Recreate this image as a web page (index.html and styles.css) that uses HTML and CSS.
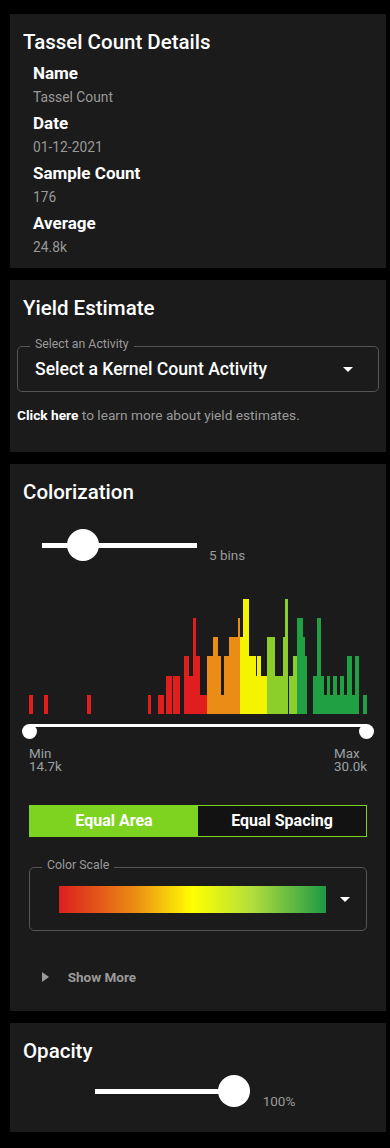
FILE: index.html
```html
<!DOCTYPE html>
<html lang="en">
<head>
  <meta charset="UTF-8">
  <meta name="viewport" content="width=device-width, initial-scale=1.0">
  <title>Tassel Count Details</title>
  <link rel="stylesheet" href="styles.css">
</head>
<body>
  <main class="panel">
    <!-- Activity details -->
    <section class="card">
      <h2 class="card-title">Tassel Count Details</h2>
      <dl class="fields">
        <dt>Name</dt>
        <dd>Tassel Count</dd>
        <dt>Date</dt>
        <dd>01-12-2021</dd>
        <dt>Sample Count</dt>
        <dd>176</dd>
        <dt>Average</dt>
        <dd>24.8k</dd>
      </dl>
    </section>

    <!-- Yield estimate -->
    <section class="card card-yield">
      <h2 class="card-title">Yield Estimate</h2>
      <fieldset class="outlined select-field">
        <legend>Select an Activity</legend>
        <div class="select-inner">
          <span class="select-value">Select a Kernel Count Activity</span>
          <svg class="caret" width="10" height="5" viewBox="0 0 10 5"><path d="M0 0h10L5 5z"/></svg>
        </div>
      </fieldset>
      <p class="hint"><strong>Click here</strong> to learn more about yield estimates.</p>
    </section>

    <!-- Colorization -->
    <section class="card card-color">
      <h2 class="card-title">Colorization</h2>

      <div class="slider-row bins">
        <div class="slider">
          <div class="slider-track"></div>
          <div class="slider-thumb" style="left: calc(26.5% - 16px)"></div>
        </div>
        <span class="slider-value">5 bins</span>
      </div>

      <svg class="histogram" width="338" height="116" viewBox="29 0 338 116" shape-rendering="crispEdges">
        <g class="red">
          <rect x="29.3" y="96.8" width="3.7" height="19.2"/>
          <rect x="44.3" y="96.8" width="4" height="19.2"/>
          <rect x="86.7" y="96.8" width="4" height="19.2"/>
          <rect x="147.5" y="96.8" width="3.8" height="19.2"/>
          <rect x="157.5" y="96.8" width="6" height="19.2"/>
          <rect x="165.5" y="77.6" width="6.2" height="38.4"/>
          <rect x="173.3" y="77.6" width="6.7" height="38.4"/>
          <rect x="184.3" y="58.4" width="4.3" height="57.6"/>
          <rect x="188.6" y="77.6" width="4" height="38.4"/>
          <rect x="192.6" y="20" width="3.7" height="96"/>
          <rect x="196.3" y="58.4" width="3.7" height="57.6"/>
          <rect x="200" y="96.8" width="7" height="19.2"/>
        </g>
        <g class="orange">
          <rect x="207" y="58.4" width="6" height="57.6"/>
          <rect x="213" y="39.2" width="4.7" height="76.8"/>
          <rect x="217.7" y="58.4" width="3.6" height="57.6"/>
          <rect x="221.3" y="96.8" width="3" height="19.2"/>
          <rect x="224.3" y="58.4" width="4.3" height="57.6"/>
          <rect x="228.6" y="39.2" width="9.4" height="76.8"/>
          <rect x="238" y="20" width="2.3" height="96"/>
        </g>
        <g class="yellow">
          <rect x="240.3" y="39.2" width="2.3" height="76.8"/>
          <rect x="242.6" y="0.8" width="6" height="115.2"/>
          <rect x="248.6" y="58.4" width="7.4" height="57.6"/>
          <rect x="256" y="77.6" width="1" height="38.4"/>
          <rect x="257" y="58.4" width="4" height="57.6"/>
          <rect x="261" y="77.6" width="5.8" height="38.4"/>
        </g>
        <g class="lime">
          <rect x="266.8" y="39.2" width="8.5" height="76.8"/>
          <rect x="275.3" y="77.6" width="8" height="38.4"/>
          <rect x="283.3" y="39.2" width="2" height="76.8"/>
          <rect x="285.3" y="0.8" width="3" height="115.2"/>
          <rect x="289" y="77.6" width="3.7" height="38.4"/>
          <rect x="292.7" y="58.4" width="4.6" height="57.6"/>
        </g>
        <g class="green">
          <rect x="297.3" y="20" width="5.7" height="96"/>
          <rect x="303" y="39.2" width="2" height="76.8"/>
          <rect x="305" y="58.4" width="2" height="57.6"/>
          <rect x="313.3" y="77.6" width="3.5" height="38.4"/>
          <rect x="316.8" y="20" width="4.2" height="96"/>
          <rect x="321" y="77.6" width="2.6" height="38.4"/>
          <rect x="323.6" y="96.8" width="3.2" height="19.2"/>
          <rect x="326.8" y="77.6" width="3.5" height="38.4"/>
          <rect x="330.3" y="96.8" width="2.5" height="19.2"/>
          <rect x="332.8" y="77.6" width="4" height="38.4"/>
          <rect x="336.8" y="96.8" width="2.8" height="19.2"/>
          <rect x="339.6" y="77.6" width="4" height="38.4"/>
          <rect x="343.6" y="96.8" width="3.7" height="19.2"/>
          <rect x="347.3" y="58.4" width="4.7" height="57.6"/>
          <rect x="352" y="96.8" width="3.3" height="19.2"/>
          <rect x="355.3" y="58.4" width="4" height="57.6"/>
          <rect x="363.3" y="96.8" width="3.7" height="19.2"/>
        </g>
      </svg>

      <div class="range">
        <div class="range-track"></div>
        <span class="range-thumb range-min"></span>
        <span class="range-thumb range-max"></span>
      </div>
      <div class="limits">
        <div>Min<br>14.7k</div>
        <div>Max<br>30.0k</div>
      </div>

      <div class="toggle">
        <button class="toggle-btn active">Equal Area</button>
        <button class="toggle-btn">Equal Spacing</button>
      </div>

      <fieldset class="outlined scale-field">
        <legend>Color Scale</legend>
        <div class="scale-inner">
          <div class="scale-bar"></div>
          <svg class="caret" width="10" height="5" viewBox="0 0 10 5"><path d="M0 0h10L5 5z"/></svg>
        </div>
      </fieldset>

      <div class="show-more">
        <svg width="7" height="10" viewBox="0 0 7 10"><path d="M0 0l7 5-7 5z"/></svg>
        <span>Show More</span>
      </div>
    </section>

    <!-- Opacity -->
    <section class="card card-opacity">
      <h2 class="card-title">Opacity</h2>
      <div class="slider-row opacity">
        <div class="slider">
          <div class="slider-track"></div>
          <div class="slider-thumb" style="left: calc(100% - 15px)"></div>
        </div>
        <span class="slider-value">100%</span>
      </div>
    </section>
  </main>
</body>
</html>
```

FILE: styles.css
```css
body {
  margin: 0;
  background: #000;
  color: #fff;
  font-family: Roboto, "Noto Sans", Arial, sans-serif;
}

.panel {
  display: flex;
  flex-direction: column;
  gap: 12px;
  width: 376px;
  padding: 14px 0 17px 10px;
}

.card {
  background: #1b1b1b;
  padding: 16px 13px 0;
}

.card-title {
  margin: 0;
  font-size: 20.5px;
  font-weight: 500;
  line-height: 24px;
}

/* details list */
.fields {
  margin: 9px 0 0;
  padding: 0 0 12px 10px;
}

.fields dt {
  font-size: 17px;
  font-weight: 700;
  line-height: 20px;
}

.fields dd {
  margin: 5px 0 7px;
  font-size: 13.8px;
  line-height: 18px;
  color: #999;
}

.fields dd:last-child {
  margin-bottom: 0;
}

/* outlined fields */
.outlined {
  margin: 0;
  padding: 0;
  min-width: 0;
  border: 1px solid #555;
  border-radius: 5px;
}

.outlined legend {
  margin-left: 12px;
  padding: 0 5px 4px;
  font-size: 12.3px;
  line-height: 14px;
  color: #9a9a9a;
}

.caret {
  fill: #fff;
  flex-shrink: 0;
}

.card-yield {
  padding: 16px 7px 29px;
}

.card-yield .card-title {
  margin-left: 6px;
}

.select-field {
  margin-top: 17px;
}

.select-inner {
  display: flex;
  align-items: center;
  justify-content: space-between;
  padding: 3px 25px 11px 17px;
}

.select-value {
  font-size: 17.6px;
  font-weight: 500;
  line-height: 22px;
}

.hint {
  margin: 15px 0 0;
  font-size: 13.7px;
  line-height: 16px;
  color: #9a9a9a;
}

.hint strong {
  color: #fff;
}

/* sliders */
.slider-row {
  display: flex;
  align-items: flex-start;
}

.slider {
  position: relative;
  height: 32px;
}

.slider-track {
  height: 5px;
  margin-top: 13.5px;
  background: #fff;
}

.slider-thumb {
  position: absolute;
  top: 0;
  width: 32px;
  height: 32px;
  border-radius: 50%;
  background: #fff;
}

.slider-value {
  margin-top: 18px;
  font-size: 13.5px;
  line-height: 16px;
  color: #9a9a9a;
}

.bins {
  margin: 25px 0 0 18.7px;
}

.bins .slider {
  width: 155px;
}

.bins .slider-value {
  margin-left: 12.3px;
}

.card-color {
  padding-bottom: 25px;
}

/* histogram */
.histogram {
  display: block;
  margin: 35px 6px 0;
}

.histogram .red rect { fill: #e01e1e; }
.histogram .orange rect { fill: #ea8c16; }
.histogram .yellow rect { fill: #f4f400; }
.histogram .lime rect { fill: #8ccf2a; }
.histogram .green rect { fill: #20a043; }

.range {
  position: relative;
  height: 16px;
  margin: 9.5px 6px 0;
}

.range-track {
  height: 3px;
  margin-top: 6.5px;
  background: #fff;
}

.range-thumb {
  position: absolute;
  top: 0.5px;
  width: 15px;
  height: 15px;
  border-radius: 50%;
  background: #fff;
}

.range-min {
  left: -7px;
}

.range-max {
  right: -7px;
}

.limits {
  display: flex;
  justify-content: space-between;
  margin: 7px 6px 0;
  font-size: 13.4px;
  line-height: 13.5px;
  color: #9aa0a6;
}

/* toggle */
.toggle {
  display: flex;
  margin: 31px 6px 0;
  border: 1.5px solid #7ed321;
}

.toggle-btn {
  flex: 1;
  padding: 0;
  border: none;
  background: #121212;
  color: #fff;
  font-family: inherit;
  font-size: 16px;
  font-weight: 700;
  line-height: 30px;
}

.toggle-btn.active {
  background: #7ed321;
}

/* color scale */
.scale-field {
  margin: 21.5px 6px 0;
}

.scale-inner {
  display: flex;
  align-items: center;
  gap: 14px;
  padding: 10px 0 17px 29px;
}

.scale-bar {
  width: 267px;
  height: 27px;
  background: linear-gradient(90deg, #dc1f1f 0%, #ea8a14 28%, #ffff00 50%, #b3df3a 72%, #1e9a46 100%);
}

.show-more {
  display: flex;
  align-items: center;
  gap: 19px;
  margin: 37px 0 0 18.7px;
  font-size: 13.5px;
  font-weight: 700;
  line-height: 18px;
  color: #9a9a9a;
}

.show-more svg {
  fill: #9a9a9a;
}

/* opacity */
.card-opacity {
  padding-bottom: 23px;
}

.opacity {
  margin: 12px 0 0 72px;
}

.opacity .slider {
  width: 138px;
}

.opacity .slider-value {
  margin-left: 29.7px;
}
```
